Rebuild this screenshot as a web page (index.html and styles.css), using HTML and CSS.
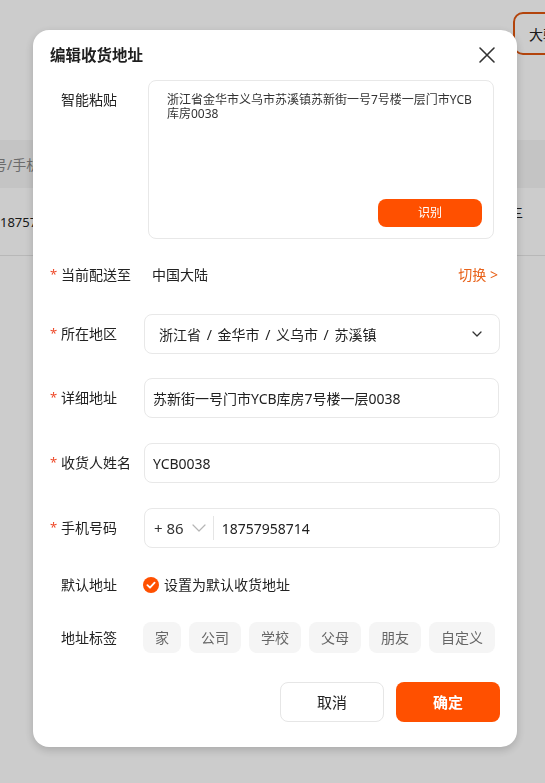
FILE: index.html
```html
<!DOCTYPE html>
<html lang="zh-CN">
<head>
<meta charset="utf-8">
<title>编辑收货地址</title>
<link rel="stylesheet" href="styles.css">
</head>
<body>
<div class="page">
  <div class="topbar"><span class="outline-btn">大驻仓库</span></div>
  <div class="thead"><span class="th">号/手机号</span></div>
  <div class="trow"><span class="td">18757958714</span><span class="td-right">三</span></div>
</div>

<div class="overlay">
  <div class="modal">
    <div class="modal-header">
      <h1 class="modal-title">编辑收货地址</h1>
      <svg class="close" width="18" height="18" viewBox="0 0 18 18"><path d="M2 2 L16 16 M16 2 L2 16" stroke="#333" stroke-width="1.6" stroke-linecap="round" fill="none"/></svg>
    </div>

    <div class="form">
      <div class="row row-paste">
        <div class="label label-top">智能粘贴</div>
        <div class="paste-box">
          <div class="paste-text">浙江省金华市义乌市苏溪镇苏新街一号7号楼一层门市YCB库房0038</div>
          <div class="paste-actions"><span class="btn-recognize">识别</span></div>
        </div>
      </div>

      <div class="row row-delivery">
        <div class="label"><span class="req">*</span>当前配送至</div>
        <div class="delivery">
          <span class="delivery-value">中国大陆</span>
          <span class="switch">切换 &gt;</span>
        </div>
      </div>

      <div class="row row-region">
        <div class="label"><span class="req">*</span>所在地区</div>
        <div class="field field-select">
          <span class="region-text">浙江省 / 金华市 / 义乌市 / 苏溪镇</span>
          <svg class="chev" width="10" height="6" viewBox="0 0 10 6"><path d="M1 1 L5 5 L9 1" stroke="#333" stroke-width="1.3" fill="none" stroke-linecap="round" stroke-linejoin="round"/></svg>
        </div>
      </div>

      <div class="row row-detail">
        <div class="label"><span class="req">*</span>详细地址</div>
        <div class="field field-wide">苏新街一号门市YCB库房7号楼一层0038</div>
      </div>

      <div class="row row-name">
        <div class="label"><span class="req">*</span>收货人姓名</div>
        <div class="field">YCB0038</div>
      </div>

      <div class="row row-phone">
        <div class="label"><span class="req">*</span>手机号码</div>
        <div class="field field-phone">
          <span class="code">+ 86</span>
          <svg class="chev-light" width="14" height="8" viewBox="0 0 14 8"><path d="M1 1 L7 7 L13 1" stroke="#b5b5b5" stroke-width="1.2" fill="none" stroke-linecap="round" stroke-linejoin="round"/></svg>
          <span class="divider"></span>
          <span class="phone-num">18757958714</span>
        </div>
      </div>

      <div class="row row-default">
        <div class="label">默认地址</div>
        <div class="check">
          <svg class="check-icon" width="16" height="16" viewBox="0 0 16 16"><circle cx="8" cy="8" r="8" fill="#ff5000"/><path d="M4.4 8.2 L7 10.7 L11.6 5.6" stroke="#fff" stroke-width="1.8" fill="none" stroke-linecap="round" stroke-linejoin="round"/></svg>
          <span class="check-text">设置为默认收货地址</span>
        </div>
      </div>

      <div class="row row-tags">
        <div class="label">地址标签</div>
        <div class="tags">
          <span class="tag tag-home">家</span>
          <span class="tag">公司</span>
          <span class="tag">学校</span>
          <span class="tag">父母</span>
          <span class="tag">朋友</span>
          <span class="tag tag-custom">自定义</span>
        </div>
      </div>

      <div class="row row-actions">
        <span class="btn btn-cancel">取消</span>
        <span class="btn btn-ok">确定</span>
      </div>
    </div>
  </div>
</div>
</body>
</html>
```

FILE: styles.css
```css
* { box-sizing: border-box; }
html, body {
  margin: 0;
  padding: 0;
  width: 545px;
  height: 783px;
  overflow: hidden;
  background: #ffffff;
  font-family: "Noto Sans", "Noto Sans CJK SC", sans-serif;
  color: #333;
}

/* background page */
.page {
  width: 545px;
}
.topbar {
  height: 140px;
  padding: 12px 0 0 513px;
  white-space: nowrap;
  overflow: hidden;
}
.outline-btn {
  display: inline-block;
  height: 43px;
  line-height: 41px;
  padding: 0 14px;
  border: 2px solid #e0560f;
  border-radius: 10px;
  font-size: 14px;
  color: #222;
}
.thead {
  height: 48px;
  background: #f5f5f5;
  display: flex;
  align-items: center;
  font-size: 14px;
  color: #888;
  white-space: nowrap;
  overflow: hidden;
}
.th { margin-left: -7px; }
.trow {
  height: 68px;
  border-bottom: 1px solid #e6e6e6;
  display: flex;
  align-items: center;
  justify-content: space-between;
  font-size: 13px;
  color: #222;
  white-space: nowrap;
  overflow: hidden;
}
.td-right { font-size: 12px; margin-right: 22px; margin-top: -18px; }

/* overlay + modal */
.overlay {
  position: fixed;
  inset: 0;
  background: rgba(0, 0, 0, 0.2);
  padding: 30px 0 0 33px;
}
.modal {
  width: 484px;
  background: #fff;
  border-radius: 16px;
  box-shadow: 0 3px 10px rgba(0, 0, 0, 0.18);
  padding: 13px 17px 25px 17px;
}
.modal-header {
  display: flex;
  align-items: center;
  justify-content: space-between;
  height: 24px;
}
.modal-title {
  margin: 0;
  font-size: 15.5px;
  font-weight: 700;
  line-height: 24px;
  color: #1f1f1f;
}
.close { margin-right: 4px; }

.form {
  display: flex;
  flex-direction: column;
}
.row {
  display: flex;
  align-items: center;
}
.label {
  width: 94px;
  flex: none;
  font-size: 14px;
  line-height: 20px;
  color: #222;
  padding-left: 11px;
  position: relative;
  white-space: nowrap;
}
.req {
  position: absolute;
  left: 0;
  top: -1px;
  color: #ee4b2b;
  font-size: 13px;
}
.label-top { align-self: flex-start; margin-top: 10px; }

.row-paste { margin-top: 13px; }
.paste-box {
  margin-left: 4px;
  width: 346px;
  height: 159px;
  border: 1px solid #e8e8e8;
  border-radius: 8px;
  padding: 12px 18px 11px 18px;
  display: flex;
  flex-direction: column;
  justify-content: space-between;
}
.paste-text {
  font-size: 12px;
  line-height: 14px;
  color: #333;
}
.paste-actions { display: flex; justify-content: flex-end; margin-right: -7px; }
.btn-recognize {
  width: 104px;
  height: 28px;
  line-height: 28px;
  text-align: center;
  background: #ff5000;
  color: #fff;
  font-size: 12px;
  border-radius: 8px;
}

.row-delivery { margin-top: 26px; }
.delivery {
  flex: 1;
  display: flex;
  justify-content: space-between;
  font-size: 14px;
  line-height: 20px;
  padding-left: 8px;
}
.delivery-value { color: #222; }
.switch { color: #e8621a; margin-right: 2px; }

.field {
  flex: 1;
  height: 40px;
  border: 1px solid #e8e8e8;
  border-radius: 8px;
  display: flex;
  align-items: center;
  padding: 0 8px;
  font-size: 14px;
  color: #222;
  white-space: nowrap;
}
.row-region { margin-top: 29px; }
.field-select {
  justify-content: space-between;
  padding: 0 17px 0 14px;
}
.region-text { word-spacing: 2px; }
.row-detail { margin-top: 24px; }
.field-wide { margin-right: 1px; }
.row-name { margin-top: 25px; }
.row-phone { margin-top: 25px; }
.field-phone { padding-left: 9px; }
.code { font-size: 15px; color: #333; }
.chev-light { margin-left: 8px; }
.divider {
  width: 1px;
  height: 24px;
  background: #e5e5e5;
  margin: 0 8px 0 7px;
}
.phone-num { font-size: 14px; color: #222; }

.row-default { margin-top: 27px; }
.check { display: flex; align-items: center; gap: 5px; margin-left: -1px; }
.check-text { font-size: 14px; line-height: 20px; color: #222; }

.row-tags { margin-top: 27px; }
.tags { display: flex; gap: 8px; margin-left: -1px; }
.tag {
  height: 31px;
  line-height: 31px;
  width: 52px;
  text-align: center;
  background: #f5f5f5;
  border-radius: 8px;
  font-size: 14px;
  color: #666;
}
.tag-home { width: 38px; }
.tag-custom { width: 66px; }

.row-actions {
  margin-top: 29px;
  justify-content: flex-end;
  gap: 12px;
}
.btn {
  width: 104px;
  height: 40px;
  line-height: 40px;
  text-align: center;
  border-radius: 8px;
  font-size: 15px;
}
.btn-cancel {
  border: 1px solid #e6e6e6;
  line-height: 38px;
  color: #222;
}
.btn-ok {
  background: #ff5000;
  color: #fff;
  font-weight: 700;
}
```
